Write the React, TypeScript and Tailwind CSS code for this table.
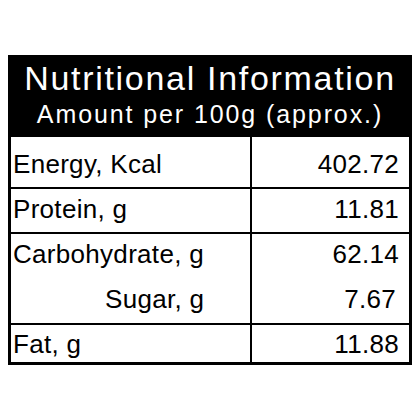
const font = { fontFamily: '"Liberation Sans", Arial, sans-serif' };

type Row = { labels: { text: string; indent?: boolean }[]; values: string[]; h: string; pt: string };

const rows: Row[] = [
  { labels: [{ text: "Energy, Kcal" }], values: ["402.72"], h: "h-[50px]", pt: "pt-[12px]" },
  { labels: [{ text: "Protein, g" }], values: ["11.81"], h: "h-[45px]", pt: "pt-[5px]" },
  {
    labels: [{ text: "Carbohydrate, g" }, { text: "Sugar, g", indent: true }],
    values: ["62.14", "7.67"],
    h: "h-[91px]",
    pt: "pt-[5px]",
  },
  { labels: [{ text: "Fat, g" }], values: ["11.88"], h: "h-[39px]", pt: "pt-[4px]" },
];

export default function App() {
  return (
    <div className="h-[420px] w-[420px] bg-white pl-[8px] pt-[55px] text-black" style={font}>
      <div className="w-[404px] border-[3px] border-black">
        <div className="flex h-[79px] flex-col items-center bg-black text-white">
          <div className="text-[34px] leading-[40px] tracking-[1.7px]">Nutritional Information</div>
          <div className="mt-[1px] text-[25px] leading-[30px] tracking-[1.9px]">Amount per 100g (approx.)</div>
        </div>
        {rows.map((row, i) => (
          <div key={i} className={`flex ${row.h} ${i > 0 ? "border-t-2 border-black" : ""}`}>
            <div className={`w-[241px] border-r-2 border-black pl-[2px] ${row.pt}`}>
              {row.labels.map((l, j) => (
                <div
                  key={j}
                  className={`text-[26px] leading-[30px] tracking-[0.3px] ${j > 0 ? "mt-[15px] pl-[92px]" : ""}`}
                >
                  {l.text}
                </div>
              ))}
            </div>
            <div className={`flex-1 pr-[10px] text-right ${row.pt}`}>
              {row.values.map((v, j) => (
                <div key={j} className={`text-[26px] leading-[30px] tracking-[0.3px] ${j > 0 ? "mt-[15px] pr-[3px]" : ""}`}>
                  {v}
                </div>
              ))}
            </div>
          </div>
        ))}
      </div>
    </div>
  );
}
